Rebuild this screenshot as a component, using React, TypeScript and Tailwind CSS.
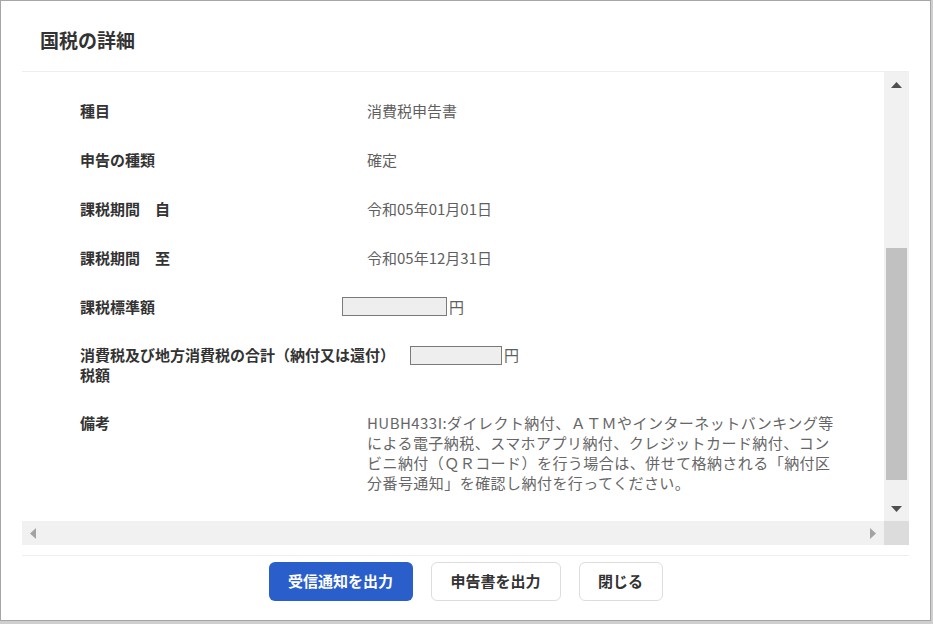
import React from "react";

const font = { fontFamily: '"Noto Sans CJK JP", "Noto Sans", sans-serif' };

function Row({ label, children, labelW = "w-[287px]" }: { label: React.ReactNode; children?: React.ReactNode; labelW?: string }) {
  return (
    <div className="flex items-start py-[14px] leading-[21px]">
      <div className={`${labelW} shrink-0 font-bold text-[#333333]`}>{label}</div>
      <div className="text-[#5f5f5f]">{children}</div>
    </div>
  );
}

function Box({ w }: { w: string }) {
  return (
    <div className="flex items-center">
      <div className={`${w} h-[19px] border border-[#7a7a7a] bg-[#eeeeee]`} />
      <span className="ml-[2px] text-[#5f5f5f]">円</span>
    </div>
  );
}

export default function App() {
  return (
    <div className="w-[933px] h-[624px] bg-[#cfcfcf] overflow-hidden" style={font}>
      <div className="w-[931px] h-[621px] bg-white border border-[#a6a6a6] flex flex-col text-[15px]">
        {/* header */}
        <div className="mx-[21px] h-[71px] border-b border-[#eeeeee] pl-[18px] pt-[26px] shrink-0">
          <div className="text-[19px] font-bold text-[#333333] leading-[26px]">国税の詳細</div>
        </div>
        {/* body */}
        <div className="mx-[21px] flex flex-col shrink-0">
          <div className="flex h-[449px]">
            <div className="flex-1 overflow-hidden pl-[58px] pt-[14px]">
              <Row label="種目">消費税申告書</Row>
              <Row label="申告の種類">確定</Row>
              <Row label="課税期間　自">令和05年01月01日</Row>
              <Row label="課税期間　至">令和05年12月31日</Row>
              <div className="flex items-center py-[14px] leading-[21px]">
                <div className="w-[262px] shrink-0 font-bold text-[#333333]">課税標準額</div>
                <Box w="w-[105px]" />
              </div>
              <div className="flex items-start py-[14px] leading-[20px]">
                <div className="w-[330px] shrink-0 font-bold text-[#333333]">
                  消費税及び地方消費税の合計（納付又は還付）
                  <br />
                  税額
                </div>
                <div className="h-[20px] flex items-center">
                  <Box w="w-[92px]" />
                </div>
              </div>
              <div className="flex items-start py-[14px] leading-[20px]">
                <div className="w-[287px] shrink-0 font-bold text-[#333333]">備考</div>
                <div className="text-[#666666] whitespace-nowrap tracking-[0.45px]">
                  <div>HUBH433I:ダイレクト納付、ＡＴＭやインターネットバンキング等</div>
                  <div>による電子納税、スマホアプリ納付、クレジットカード納付、コン</div>
                  <div>ビニ納付（ＱＲコード）を行う場合は、併せて格納される「納付区</div>
                  <div>分番号通知」を確認し納付を行ってください。</div>
                </div>
              </div>
            </div>
            {/* vertical scrollbar */}
            <div className="w-[25px] bg-[#f1f1f1] flex flex-col shrink-0">
              <div className="h-[25px] flex items-center justify-center">
                <svg width="11" height="6" viewBox="0 0 11 6"><path d="M5.5 0 L11 6 L0 6 Z" fill="#505050" /></svg>
              </div>
              <div className="flex-1 pt-[151px] px-[2px]">
                <div className="h-[232px] bg-[#c1c1c1]" />
              </div>
              <div className="h-[25px] flex items-center justify-center">
                <svg width="11" height="6" viewBox="0 0 11 6"><path d="M0 0 L11 0 L5.5 6 Z" fill="#505050" /></svg>
              </div>
            </div>
          </div>
          {/* horizontal scrollbar */}
          <div className="flex h-[24px]">
            <div className="flex-1 bg-[#f1f1f1] flex items-center justify-between px-[8px]">
              <svg width="6" height="11" viewBox="0 0 6 11"><path d="M6 0 L6 11 L0 5.5 Z" fill="#a3a3a3" /></svg>
              <svg width="6" height="11" viewBox="0 0 6 11"><path d="M0 0 L6 5.5 L0 11 Z" fill="#a3a3a3" /></svg>
            </div>
            <div className="w-[25px] bg-[#dcdcdc]" />
          </div>
        </div>
        {/* footer */}
        <div className="mx-[21px] mt-[10px] border-t border-[#eeeeee] pt-[6px] flex justify-center gap-[18px]">
          <button className="w-[144px] h-[39px] rounded-[6px] bg-[#2a5ecb] text-white font-bold text-[15px]">受信通知を出力</button>
          <button className="w-[130px] h-[39px] rounded-[6px] bg-white border border-[#dddddd] text-[#333333] font-bold text-[15px]">申告書を出力</button>
          <button className="w-[84px] h-[39px] rounded-[6px] bg-white border border-[#dddddd] text-[#333333] font-bold text-[15px]">閉じる</button>
        </div>
      </div>
    </div>
  );
}
